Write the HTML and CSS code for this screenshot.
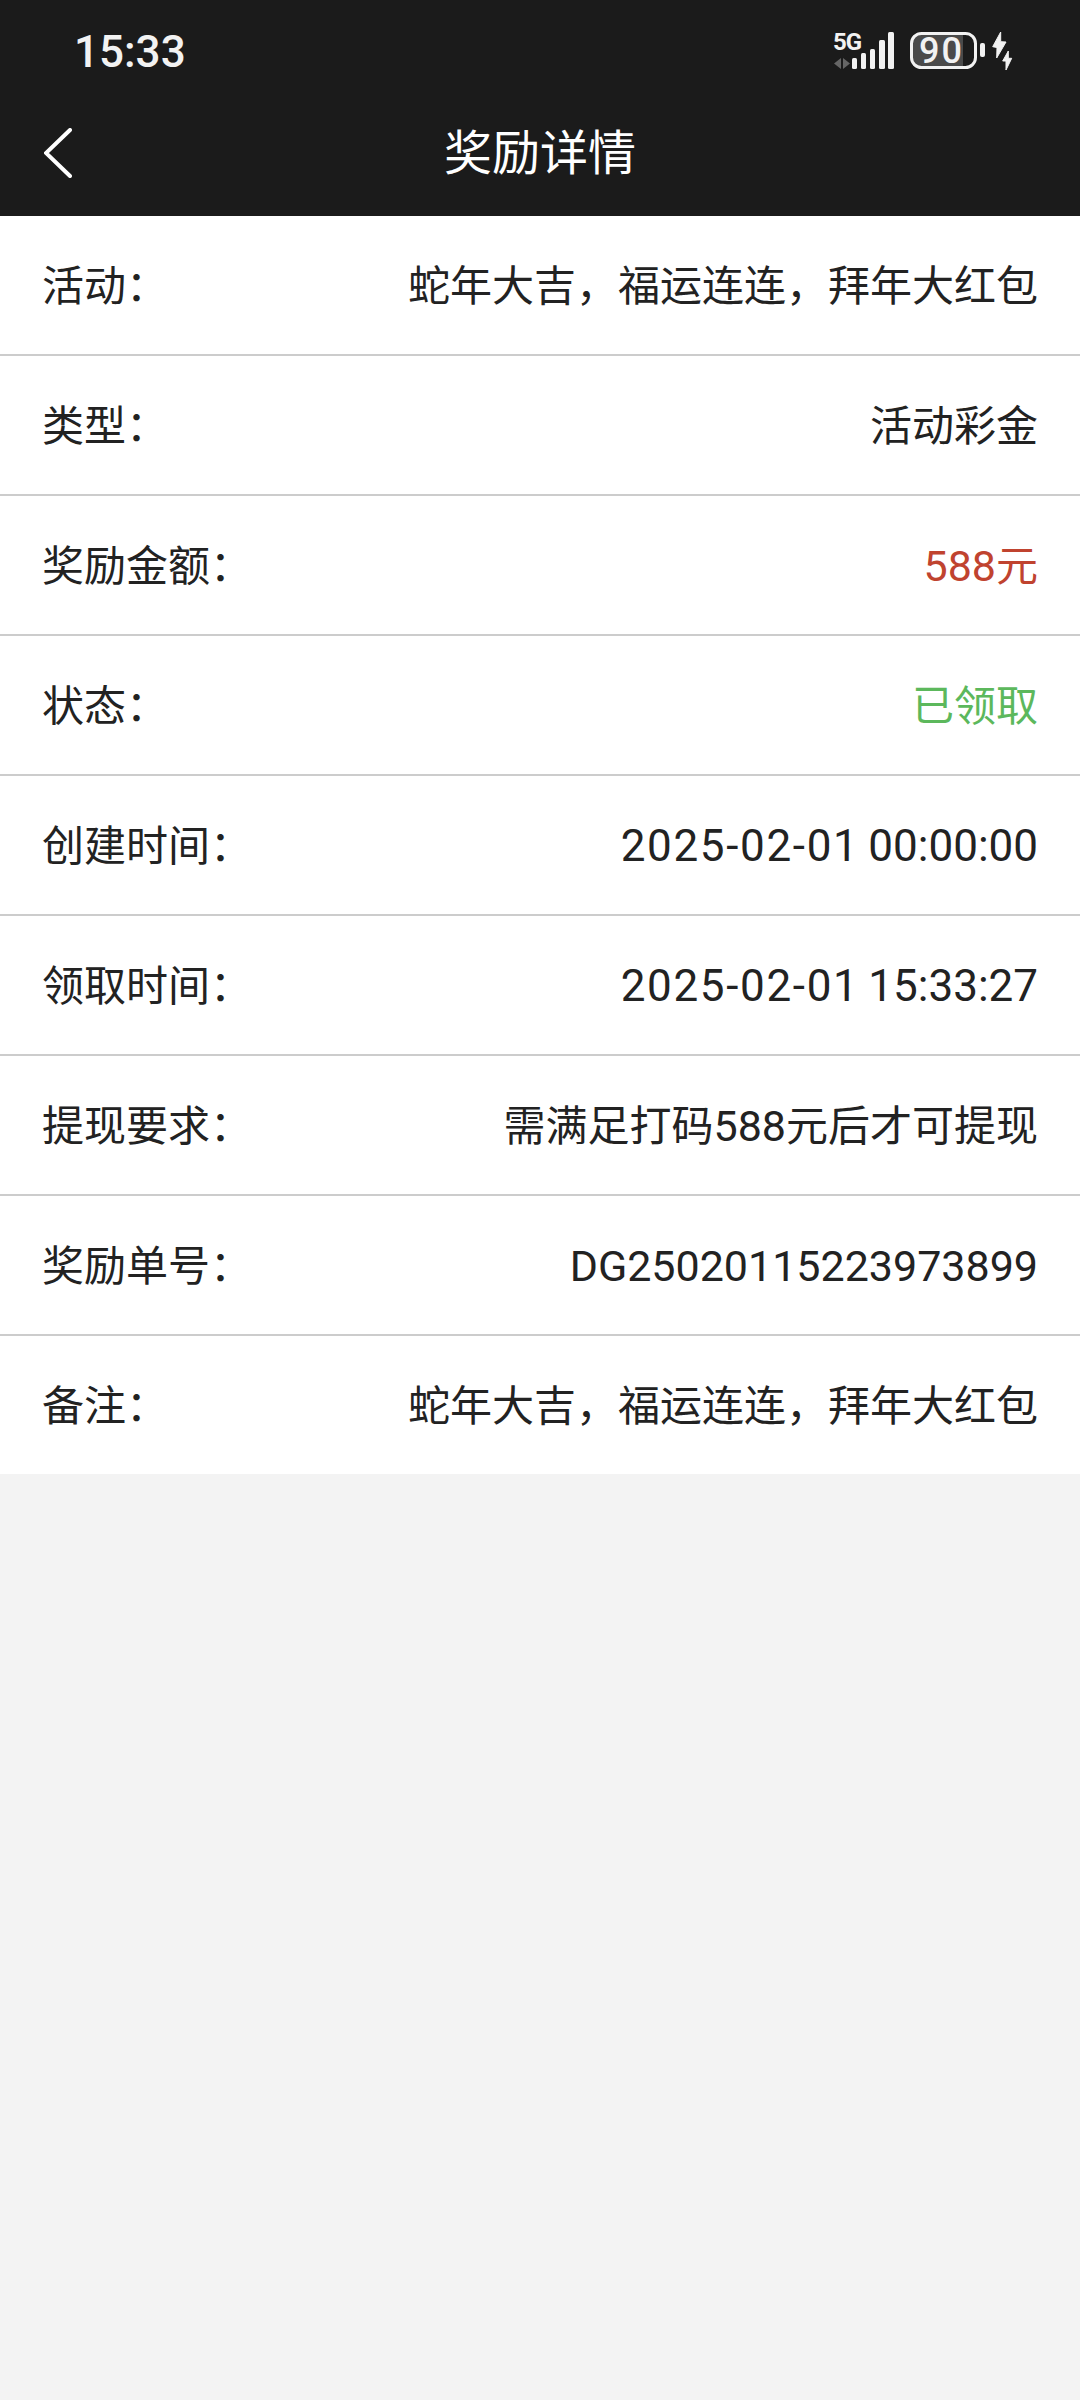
FILE: index.html
```html
<!DOCTYPE html>
<html lang="zh-CN">
<head>
  <meta charset="UTF-8">
  <meta name="viewport" content="width=device-width, initial-scale=1.0">
  <title>奖励详情</title>
  <link rel="stylesheet" href="styles.css">
</head>
<body>
  <header class="top">
    <div class="status-bar">
      <span class="time">15:33</span>
      <svg class="status-icons" width="180" height="40" viewBox="0 0 180 40">
        <text class="net" x="0" y="18">5G</text>
        <path class="arrows" d="M8 26v11l-7-5.500zM10 26l7 5.500-7 5.500z"/>
        <rect class="bar" x="19" y="26" width="5" height="11" rx="1.500"/>
        <rect class="bar" x="28" y="21" width="5" height="16" rx="1.500"/>
        <rect class="bar" x="37" y="17" width="5" height="20" rx="1.500"/>
        <rect class="bar" x="46" y="8" width="6" height="29" rx="1.500"/>
        <rect class="bar" x="55" y="0" width="6" height="37" rx="1.500"/>
        <rect class="batt-fill" x="80" y="3" width="50" height="31"/>
        <rect class="batt-box" x="78.500" y="1.500" width="64" height="34" rx="10"/>
        <text class="batt-num" x="108.500" y="31">90</text>
        <rect class="bar" x="147" y="11" width="5" height="14" rx="2"/>
        <path class="bolt" d="M167.700 0 159.700 14.700 164 15.500 163.700 26 173 10 167.700 9.700z"/>
        <path class="bolt" d="M175.300 19 169.700 29 173 29 173 38 178.700 26.300 175.300 26.300z"/>
      </svg>
    </div>
    <nav class="nav-bar">
      <a class="back" href="#">
        <svg width="28" height="50" viewBox="0 0 28 50"><path d="M26 2 2 25l24 23"/></svg>
      </a>
      <h1>奖励详情</h1>
    </nav>
  </header>
  <main class="detail-list">
    <div class="row"><span>活动：</span><span>蛇年大吉，福运连连，拜年大红包</span></div>
    <div class="row"><span>类型：</span><span>活动彩金</span></div>
    <div class="row"><span>奖励金额：</span><span class="red"><span class="digits">588</span>元</span></div>
    <div class="row"><span>状态：</span><span class="green">已领取</span></div>
    <div class="row"><span>创建时间：</span><span class="latin date"><span class="day">2025-02-01</span> <span class="clock">00:00:00</span></span></div>
    <div class="row"><span>领取时间：</span><span class="latin date"><span class="day">2025-02-01</span> <span class="clock">15:33:27</span></span></div>
    <div class="row"><span>提现要求：</span><span>需满足打码<span class="digits">588</span>元后才可提现</span></div>
    <div class="row"><span>奖励单号：</span><span class="latin">DG25020115223973899</span></div>
    <div class="row"><span>备注：</span><span>蛇年大吉，福运连连，拜年大红包</span></div>
  </main>
</body>
</html>
```

FILE: styles.css
```css
body {
  margin: 0;
  min-height: 2400px;
  background: #f3f3f3;
  font-family: Roboto, "Noto Sans CJK SC", sans-serif;
  color: #222;
}
.top {
  background: #1b1b1b;
  color: white;
}
.status-bar {
  height: 72px;
  padding: 16px 67px 0 74px;
  display: flex;
  align-items: center;
  justify-content: space-between;
}
.time {
  font-size: 44px;
  font-weight: 500;
  color: #f2f2f2;
}
.status-icons {
  overflow: visible;
}
.net {
  font-size: 24px;
  font-weight: 700;
  letter-spacing: -1px;
  fill: #f2f2f2;
}
.arrows {
  fill: #666;
}
.bar {
  fill: #f2f2f2;
}
.bolt {
  fill: #f2f2f2;
  stroke: #f2f2f2;
  stroke-width: 1;
  stroke-linejoin: round;
}
.batt-fill {
  fill: #4a4a4a;
}
.batt-box {
  fill: none;
  stroke: #f2f2f2;
  stroke-width: 3;
}
.batt-num {
  font-size: 36px;
  font-weight: 500;
  letter-spacing: 2px;
  fill: #f2f2f2;
  text-anchor: middle;
}
.nav-bar {
  height: 122px;
  padding: 0 44px 6px;
  display: flex;
  align-items: center;
  justify-content: center;
  position: relative;
}
.back {
  position: absolute;
  left: 44px;
  top: 40px;
  display: flex;
}
.back path {
  fill: none;
  stroke: white;
  stroke-width: 4;
  stroke-linecap: round;
}
.nav-bar h1 {
  margin: 0;
  font-size: 48px;
  font-weight: 400;
}
.detail-list {
  background: white;
}
.row {
  height: 140px;
  box-sizing: border-box;
  padding: 0 42px 5px;
  display: flex;
  align-items: center;
  justify-content: space-between;
  font-size: 42px;
  border-bottom: 2px solid #ccc;
}
.row:last-child {
  height: 138px;
  border-bottom: none;
}
.latin {
  padding-top: 6px;
  font-size: 43px;
}
.date {
  font-size: 44px;
}
.day {
  letter-spacing: 1.65px;
}
.clock {
  margin-left: -2px;
}
.digits {
  font-size: 43px;
}
.red {
  color: #c0432f;
}
.green {
  color: #5cb85c;
}
```
